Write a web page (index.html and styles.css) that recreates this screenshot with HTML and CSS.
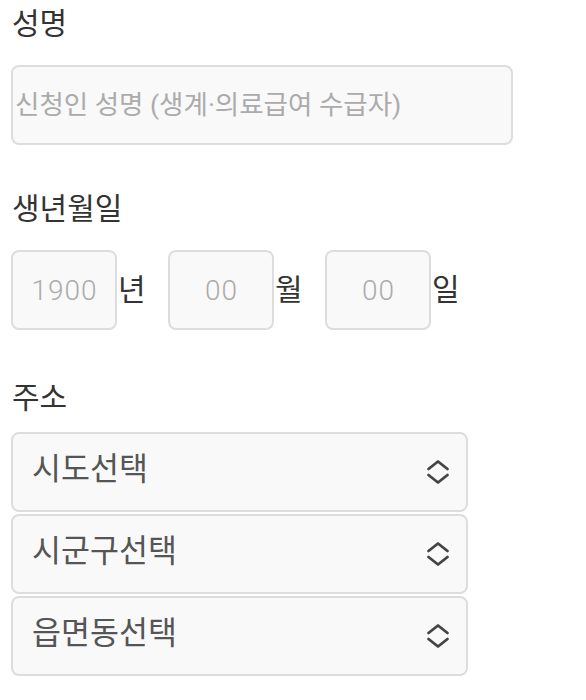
FILE: index.html
```html
<!DOCTYPE html>
<html lang="ko">
<head>
<meta charset="utf-8">
<title>신청서</title>
<link rel="stylesheet" href="styles.css">
</head>
<body>
<form class="form">
  <section class="field field-name">
    <label class="label" for="name">성명</label>
    <input class="text-input name-input" id="name" type="text" placeholder="신청인 성명 (생계·의료급여 수급자)">
  </section>

  <section class="field field-birth">
    <div class="label">생년월일</div>
    <div class="date-row">
      <input class="text-input date-input" type="text" placeholder="1900">
      <span class="date-unit">년</span>
      <input class="text-input date-input" type="text" placeholder="00">
      <span class="date-unit">월</span>
      <input class="text-input date-input" type="text" placeholder="00">
      <span class="date-unit">일</span>
    </div>
  </section>

  <section class="field field-addr">
    <div class="label">주소</div>
    <div class="select-list">
      <div class="select" role="combobox">
        <span class="select-text">시도선택</span>
        <svg class="chev" viewBox="0 0 24 26"><polyline points="2.5,10 12,2.5 21.5,10"/><polyline points="2.5,16 12,23.5 21.5,16"/></svg>
      </div>
      <div class="select" role="combobox">
        <span class="select-text">시군구선택</span>
        <svg class="chev" viewBox="0 0 24 26"><polyline points="2.5,10 12,2.5 21.5,10"/><polyline points="2.5,16 12,23.5 21.5,16"/></svg>
      </div>
      <div class="select" role="combobox">
        <span class="select-text">읍면동선택</span>
        <svg class="chev" viewBox="0 0 24 26"><polyline points="2.5,10 12,2.5 21.5,10"/><polyline points="2.5,16 12,23.5 21.5,16"/></svg>
      </div>
    </div>
  </section>
</form>
</body>
</html>
```

FILE: styles.css
```css
html, body {
  margin: 0;
  padding: 0;
  background: #ffffff;
}

body {
  font-family: Roboto, "Noto Sans CJK KR", sans-serif;
  color: #333333;
}

.form {
  display: flex;
  flex-direction: column;
  padding: 3px 0 0 11px;
}

.field {
  display: flex;
  flex-direction: column;
}

.field-birth {
  margin-top: 43px;
}

.field-addr {
  margin-top: 47px;
}

.label {
  display: block;
  font-size: 30px;
  line-height: 42px;
  color: #333333;
  padding-left: 1px;
}

.text-input {
  box-sizing: border-box;
  height: 80px;
  border: 2px solid #dddddd;
  border-radius: 8px;
  background: #f9f9f9;
  font-family: Roboto, "Noto Sans CJK KR", sans-serif;
  color: #333333;
  outline: none;
  margin: 0;
}

.text-input::placeholder {
  color: #ababab;
  opacity: 1;
}

.name-input {
  margin-top: 20px;
  width: 502px;
  padding: 0 0 2px 2px;
  font-size: 26.5px;
}

.date-row {
  display: flex;
  align-items: center;
  margin-top: 20px;
}

.date-input {
  width: 106px;
  padding: 0 0 0 1px;
  text-align: center;
  font-size: 28px;
  font-weight: 300;
  letter-spacing: 1px;
}

.date-input + .date-unit {
  margin-left: 1px;
}

.date-unit {
  font-size: 30px;
  line-height: 40px;
  color: #333333;
  width: 50px;
}

.select-list {
  display: flex;
  flex-direction: column;
  gap: 2px;
  margin-top: 13px;
}

.select {
  box-sizing: border-box;
  width: 457px;
  height: 80px;
  border: 2px solid #dddddd;
  border-radius: 8px;
  background: #f9f9f9;
  display: flex;
  align-items: center;
  justify-content: space-between;
  padding: 0 16px 0 19px;
}

.select-text {
  font-size: 31.5px;
  line-height: 40px;
  color: #555555;
  padding-bottom: 5px;
}

.chev {
  flex: 0 0 auto;
  width: 24px;
  height: 26px;
  fill: none;
  stroke: #444444;
  stroke-width: 2.8;
  stroke-linecap: round;
  stroke-linejoin: round;
}
```
